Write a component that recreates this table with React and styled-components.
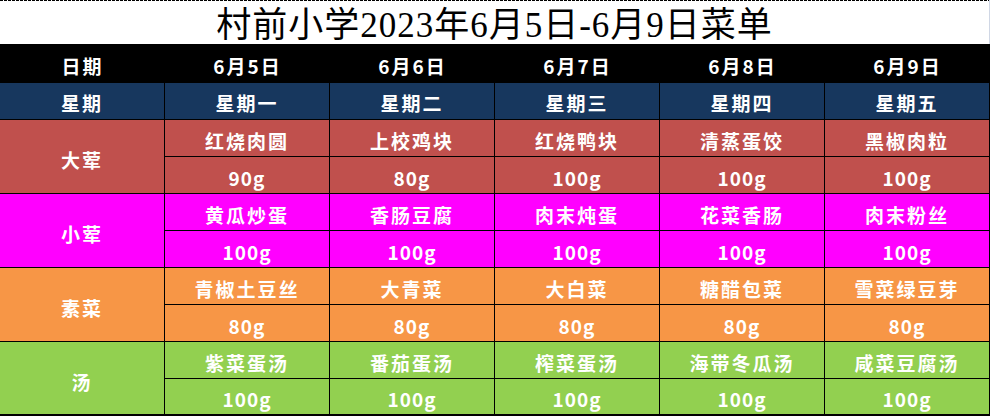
import React from 'react';
import styled, { createGlobalStyle } from 'styled-components';

const colWidth = 165;

const GlobalStyle = createGlobalStyle`
    html, body {
        margin: 0;
        padding: 0;
        background: #ffffff;
        overflow: hidden;
    }
    body {
        font-family: "Noto Sans CJK SC", sans-serif;
    }
`;

const Sheet = styled.div`
    display: grid;
    grid-template-columns: repeat(6, ${colWidth}px);
    grid-template-rows: 44px 39px;
    grid-auto-rows: 37px;
    width: ${colWidth * 6}px;
`;

const Title = styled.div`
    grid-column: 1 / -1;
    box-sizing: border-box;
    border-right: 1px solid #d0d7e5;
    background-image: repeating-linear-gradient(to right, #000 0 3px, transparent 3px 4px);
    background-size: 100% 1px;
    background-repeat: no-repeat;
    display: flex;
    align-items: flex-end;
    justify-content: center;
    padding-bottom: 0;
    font-family: "Liberation Serif", "Noto Sans CJK SC", serif;
    font-size: 35px;
    line-height: 36px;
    color: #000;
    letter-spacing: 1px;
`;

const Cell = styled.div`
    box-sizing: border-box;
    display: flex;
    align-items: center;
    justify-content: center;
    padding-top: ${p => p.$shift || 4}px;
    background: ${p => p.$bg};
    border-right: 1px solid #000;
    border-bottom: ${p => p.$last ? 2 : 1}px solid #000;
    color: #fff;
    font-weight: 700;
    font-size: 19px;
    letter-spacing: 2px;
    white-space: nowrap;
`;

const HeadCell = styled(Cell)`
    border: none;
    padding-top: 3px;
`;

const Category = styled(Cell)`
    grid-row: span 2;
    padding-top: 6px;
`;

const Amount = styled(Cell)`
    letter-spacing: 1px;
`;

const dates = ['6月5日', '6月6日', '6月7日', '6月8日', '6月9日'];
const weekdays = ['星期一', '星期二', '星期三', '星期四', '星期五'];

const sections = [
    { name: '大荤', bg: '#c0504d', dishes: ['红烧肉圆', '上校鸡块', '红烧鸭块', '清蒸蛋饺', '黑椒肉粒'], amounts: ['90g', '80g', '100g', '100g', '100g'] },
    { name: '小荤', bg: '#ff00ff', dishes: ['黄瓜炒蛋', '香肠豆腐', '肉末炖蛋', '花菜香肠', '肉末粉丝'], amounts: ['100g', '100g', '100g', '100g', '100g'] },
    { name: '素菜', bg: '#f79646', dishes: ['青椒土豆丝', '大青菜', '大白菜', '糖醋包菜', '雪菜绿豆芽'], amounts: ['80g', '80g', '80g', '80g', '80g'] },
    { name: '汤', bg: '#92d050', dishes: ['紫菜蛋汤', '番茄蛋汤', '榨菜蛋汤', '海带冬瓜汤', '咸菜豆腐汤'], amounts: ['100g', '100g', '100g', '100g', '100g'] },
];

export default function App() {
    return (
        <>
            <GlobalStyle />
            <Sheet>
                <Title>村前小学2023年6月5日-6月9日菜单</Title>
                <HeadCell $bg="#000">日期</HeadCell>
                {dates.map(d => <HeadCell key={d} $bg="#000">{d}</HeadCell>)}
                <Cell $bg="#17375e" $shift={2}>星期</Cell>
                {weekdays.map(w => <Cell key={w} $bg="#17375e" $shift={2}>{w}</Cell>)}
                {sections.map((s, si) => {
                    const last = si === sections.length - 1;
                    return (
                        <React.Fragment key={s.name}>
                            <Category $bg={s.bg} $last={last}>{s.name}</Category>
                            {s.dishes.map((d, i) => <Cell key={'d' + i} $bg={s.bg}>{d}</Cell>)}
                            {s.amounts.map((a, i) => <Amount key={'a' + i} $bg={s.bg} $last={last}>{a}</Amount>)}
                        </React.Fragment>
                    );
                })}
            </Sheet>
        </>
    );
}
